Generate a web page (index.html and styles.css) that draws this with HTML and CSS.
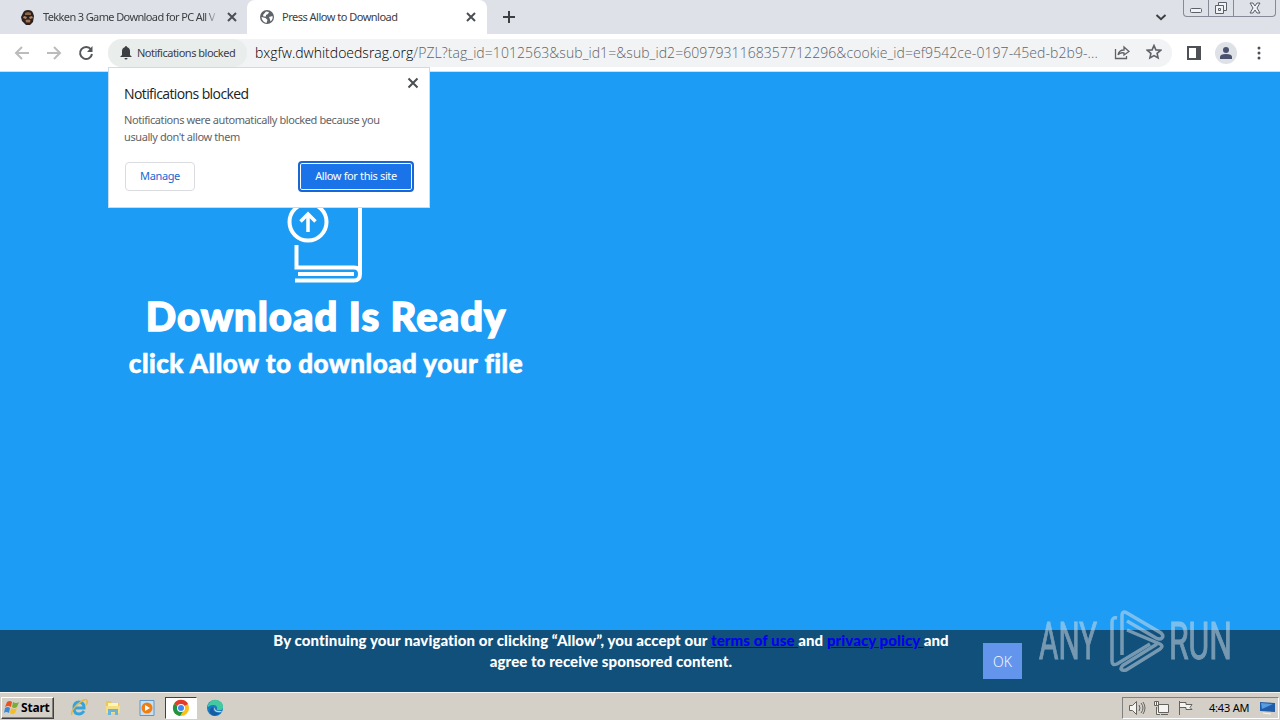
FILE: index.html
```html
<!DOCTYPE html>
<html lang="en">
<head>
    <meta charset="UTF-8">
    <title>Press Allow to Download</title>
    <link rel="stylesheet" href="styles.css">
</head>
<body>
    <div class="tabstrip">
        <div class="tab">
            <svg class="favicon" width="16" height="16" viewBox="0 0 16 16">
                <path d="M3 4Q4 1 8 1t5 3l1 3-1 6-3 3H6l-4-4-1-4z" fill="#2b2020"/>
                <path d="M5 4l3-1 3 1v2H5z" fill="#8b6545"/>
                <path d="M4 7l3 1-1 2-3-1zM9 8l3-1 1 2-3 1z" fill="#b78660"/>
                <path d="M5 11l3-1 3 1-1 3H6z" fill="#6b402b"/>
                <path d="M6 12h4" stroke="#d5aa84"/>
            </svg>
            <span class="tab-title title-one">Tekken 3 Game Download for PC All V</span>
            <svg class="close" width="10" height="10" viewBox="0 0 10 10"><path d="M1 1l8 8M9 1L1 9"/></svg>
        </div>
        <div class="tab active">
            <svg class="favicon" width="16" height="16" viewBox="0 0 16 16">
                <circle cx="8" cy="8" r="7" fill="#5f6368"/>
                <path d="M2.500 8l4 1 2 2-1 3Q3 13 2.500 8zM7 2.500l3 .5-1 2-2 1v1.500H4.500L4 6zM10 8l3.500-1 .2 2q-.5 2.500-2.200 3.500l-.5-2z" fill="#fff"/>
            </svg>
            <span class="tab-title title-two">Press Allow to Download</span>
            <svg class="close" width="10" height="10" viewBox="0 0 10 10"><path d="M1 1l8 8M9 1L1 9"/></svg>
        </div>
        <svg class="new-tab" width="12" height="12" viewBox="0 0 12 12"><path d="M6 0v12M0 6h12"/></svg>
        <svg class="chevron" width="12" height="8" viewBox="0 0 12 8"><path d="M1.500 2L6 6.200 10.500 2"/></svg>
        <div class="window-buttons">
            <span><svg width="14" height="16" viewBox="0 0 14 16"><rect x="1.500" y="8.500" width="11" height="4" rx="1"/></svg></span>
            <span><svg width="14" height="16" viewBox="0 0 14 16"><path d="M4.500 5V2.500h8v8H10M1.500 5.500h8v8h-8zM4.500 8.500h2v2h-2z"/></svg></span>
            <span><svg width="12" height="16" viewBox="0 0 12 16"><path d="M1 3h3l2 3 2-3h3L8 8l3 5H8l-2-3-2 3H1l3-5z"/></svg></span>
        </div>
    </div>

    <div class="toolbar">
        <svg class="nav" width="16" height="16" viewBox="0 0 16 16"><path d="M15 8H2M8 2L2 8l6 6"/></svg>
        <svg class="nav" width="16" height="16" viewBox="0 0 16 16"><path d="M1 8h13M8 2l6 6-6 6"/></svg>
        <svg class="nav reload" width="16" height="16" viewBox="0 0 16 16"><path d="M13 4.500A6 6 0 1 0 14 9"/><path d="M14.500 1v6H9z"/></svg>
        <div class="address">
            <div class="chip">
                <svg width="12" height="14" viewBox="0 0 12 14"><path d="M5 1a1 1 0 0 1 2 0q3 1 3 4v4l2 2H0l2-2V5q0-3 3-4zM4.500 12h3a1.500 1.500 0 0 1-3 0z" fill="#3c4043"/></svg>
                <span>Notifications blocked</span>
            </div>
            <div class="url"><span class="host">bxgfw.dwhitdoedsrag.org</span><span class="path">/PZL?tag_id=1012563&amp;sub_id1=&amp;sub_id2=6097931168357712296&amp;cookie_id=ef9542ce-0197-45ed-b2b9-...</span></div>
            <svg class="share" width="16" height="16" viewBox="0 0 16 16"><path d="M1.500 5v9.500h11V12M4 11q1-5 6-5V3l5 4.500L10 11V9q-4-1-6 2z"/></svg>
            <svg class="star" width="16" height="16" viewBox="0 0 16 16"><path d="M8 1.500l1.900 4.400 4.700.4-3.500 3.100 1 4.600L8 11.600 3.900 14l1-4.600-3.500-3.100 4.700-.4z"/></svg>
        </div>
        <svg class="panel" width="14" height="14" viewBox="0 0 14 14"><path d="M1 1h12v12H1z" fill="none" stroke="#4d5156" stroke-width="2"/><path d="M9 1h4v12H9z" fill="#4d5156"/></svg>
        <svg class="profile" width="22" height="22" viewBox="0 0 22 22"><circle cx="11" cy="11" r="11" fill="#dee1e6"/><circle cx="11" cy="8" r="3" fill="#4a5270"/><path d="M5 17v-2q0-3 6-3t6 3v2z" fill="#4a5270"/></svg>
        <svg class="menu" width="4" height="14" viewBox="0 0 4 14"><circle cx="2" cy="2" r="1.500"/><circle cx="2" cy="7" r="1.500"/><circle cx="2" cy="12" r="1.500"/></svg>
    </div>

    <div class="page">
        <div class="hero">
            <svg class="book" width="80" height="96" viewBox="0 0 80 96">
                <g fill="none" stroke="#fff" stroke-width="4">
                    <circle cx="22" cy="34" r="18.500"/>
                    <path d="M22 44V27M14.500 33.500L22 26l7.500 7.500" stroke-width="3.500"/>
                    <path d="M10.500 57v22.500H68q6 0 6 6.500t-6 6.500H9M74 86V15M12 86h56"/>
                </g>
            </svg>
            <h1>Download Is Ready</h1>
            <h2>click Allow to download your file</h2>
        </div>
        <div class="consent">
            <p>By continuing your navigation or clicking “Allow”, you accept our <a href="#">terms of use </a>and <a href="#">privacy policy </a>and<br>agree to receive sponsored content.</p>
            <button class="ok">OK</button>
        </div>
    </div>

    <div class="popup">
        <svg class="close" width="12" height="12" viewBox="0 0 12 12"><path d="M1.500 1.500l9 9M10.500 1.500l-9 9"/></svg>
        <h3>Notifications blocked</h3>
        <p>Notifications were automatically blocked because you<br>usually don't allow them</p>
        <div class="actions">
            <button class="manage">Manage</button>
            <button class="allow">Allow for this site</button>
        </div>
    </div>

    <svg class="watermark" width="210" height="76" viewBox="0 0 210 76">
        <text x="4" y="53" textLength="58" lengthAdjust="spacingAndGlyphs">ANY</text>
        <text x="134" y="53" textLength="63" lengthAdjust="spacingAndGlyphs">RUN</text>
        <g fill="none" stroke-width="3.500">
            <path d="M82 12q-5-1-5 4v39q0 5 5 3l33-20"/>
            <path d="M87 49V10q0-6 5-3l34 20q3 3 1 5t-6 0L92 15"/>
            <path d="M92 24l33 14q4 2 0 5L91 64q-4 1-5-1 0-3 4-5l32-20"/>
        </g>
    </svg>

    <div class="taskbar">
        <div class="start">
            <svg width="16" height="15" viewBox="0 0 16 15"><path d="M3 2q3-2 5 0L7 7Q4 5 1 7z" fill="#e85324"/><path d="M9 2q3 2 6 0l-2 5q-3 2-5 0z" fill="#79ad36"/><path d="M1 8q3-2 5 0l-1 5q-3-2-5 0z" fill="#3b8bd4"/><path d="M7 8q3 2 6 0l-2 5q-3 2-5 0z" fill="#f5bd28"/></svg>
            <b>Start</b>
        </div>
        <div class="launch">
            <svg width="18" height="18" viewBox="0 0 18 18"><path d="M14 12q-2 3-5 3-5 0-5-6t5-6q5 0 5 6H5" fill="none" stroke="#35a4dc" stroke-width="3"/><path d="M2 16Q0 12 8 5t9-3q1 1-1 4" fill="none" stroke="#e9b83c" stroke-width="1.500"/></svg>
        </div>
        <div class="launch">
            <svg width="18" height="18" viewBox="0 0 18 18"><path d="M2 2h5l1 2h7v10H2z" fill="#e9c75c"/><path d="M4 4h10v3H4z" fill="#fff5b0"/><path d="M2 7h14v7H2z" fill="#f4de86"/><path d="M4 16v-6h10v6h-3v-3H7v3z" fill="#69b4d8"/></svg>
        </div>
        <div class="launch">
            <svg width="18" height="18" viewBox="0 0 18 18"><path d="M2 1.500h14v15H2z" fill="#c5dff4" stroke="#5f97c8"/><circle cx="9" cy="9" r="5.500" fill="#ef7d12"/><path d="M7 6l5 3-5 3z" fill="#fff"/></svg>
        </div>
        <div class="launch running">
            <svg width="18" height="18" viewBox="0 0 18 18"><circle cx="9" cy="9" r="8" fill="#fbc116"/><path d="M9 9L2 5a8 8 0 0 1 14 0z" fill="#e33b2e"/><path d="M9 9L2 5a8 8 0 0 0 6 12l4-6z" fill="#229342"/><circle cx="9" cy="9" r="4" fill="#fff"/><circle cx="9" cy="9" r="3" fill="#4285f4"/></svg>
        </div>
        <div class="launch">
            <svg width="18" height="18" viewBox="0 0 18 18"><circle cx="9" cy="9" r="8" fill="#167bc4"/><path d="M2 6q3-6 9-5 7 2 6 8-1 3-6 2 1-5-4-5-3 0-5 2z" fill="#43c9a0"/><path d="M7 8q-1 6 7 6-4 4-8 2-4-3-1-7z" fill="#155ca5"/><path d="M9 8q-1 3 3 4h4l-1 1q-6 1-7-3z" fill="#d4d0c8"/></svg>
        </div>
        <div class="tray">
            <svg width="18" height="16" viewBox="0 0 18 16"><path d="M1.500 5.500h3l4-4v13l-4-4h-3z"/><path d="M11 5q2 3 0 6M13 3q4 5 0 10M15 2q4 6 0 12" fill="none"/></svg>
            <svg class="network" width="18" height="16" viewBox="0 0 18 16"><path d="M5.500 4.500h10v8h-10zM8 14.500h7M3.500 7v7.500H7M1.500 1.500v4h4v-4zM3.500 1v5"/></svg>
            <svg class="flag" width="16" height="16" viewBox="0 0 16 16"><path d="M1.500 1v14M2 2.500h6v2h6l-2 3 2 2H8v-2H2"/></svg>
            <span class="clock">4:43 AM</span>
            <svg class="desktop" width="16" height="14" viewBox="0 0 16 14"><path d="M0 1l15 1v9L0 10z" fill="#215caa"/><path d="M1 2l12 1-11 5z" fill="#579be0"/><path d="M3 12l8 1" stroke="#f3f5f7"/></svg>
        </div>
    </div>
</body>
</html>
```
FILE: styles.css
```css
* {
    box-sizing: border-box;
}

body {
    margin: 0;
    width: 1280px;
    height: 720px;
    overflow: hidden;
    position: relative;
    display: flex;
    flex-direction: column;
    font-family: "Noto Sans", sans-serif;
    font-size: 11px;
    color: #3c4043;
}

svg {
    display: block;
    flex: none;
}

button {
    font-family: inherit;
    padding: 0;
}

.tabstrip {
    height: 34px;
    background: #dee1e8;
    display: flex;
    align-items: center;
    flex: none;
}

.tab {
    width: 247px;
    height: 34px;
    padding: 0 10px 0 20px;
    display: flex;
    align-items: center;
    flex: none;
}

.tab.active {
    width: 240px;
    padding: 0 11px 0 12px;
    background: #fff;
    border-radius: 8px 8px 0 0;
}

.tab-title {
    margin-left: 7px;
    margin-top: -1px;
    white-space: nowrap;
    flex: 1;
}

.title-one {
    letter-spacing: -0.62px;
    margin-right: 8px;
    -webkit-mask-image: linear-gradient(to right, #000 92%, transparent);
}

.title-two {
    letter-spacing: -0.5px;
}

.close {
    fill: none;
    stroke: #4b4f53;
    stroke-width: 2;
}

.new-tab {
    margin-left: 16px;
    stroke: #3c4043;
    stroke-width: 2;
}

.chevron {
    margin-left: auto;
    fill: none;
    stroke: #3c4043;
    stroke-width: 2;
}

.window-buttons {
    display: flex;
    align-self: flex-start;
    height: 17px;
    margin: 0 4px 0 16px;
    border: 1px solid #858a96;
    border-top: 0;
    border-radius: 0 0 4px 4px;
}

.window-buttons span {
    width: 25px;
    display: flex;
    justify-content: center;
    border-right: 1px solid #858a96;
}

.window-buttons span:last-child {
    width: 41px;
    border: 0;
}

.window-buttons svg {
    fill: #f1f2f5;
    stroke: #5c606b;
}

.toolbar {
    height: 38px;
    flex: none;
    display: flex;
    align-items: center;
    background: #fff;
    border-bottom: 1px solid #d5dce3;
    padding-left: 14px;
}

.nav {
    margin-right: 16px;
    fill: none;
    stroke: #babcbe;
    stroke-width: 2;
}

.reload {
    margin-right: 14px;
    stroke: #54585c;
}

.reload path:last-child {
    fill: #54585c;
    stroke: none;
}

.address {
    width: 1064px;
    height: 28px;
    display: flex;
    align-items: center;
    background: #f1f3f4;
    border-radius: 14px;
}

.chip {
    display: flex;
    align-items: center;
    width: 139px;
    height: 28px;
    padding-left: 12px;
    background: #e9eeed;
    border-radius: 14px;
    letter-spacing: -0.5px;
    white-space: nowrap;
}

.chip span {
    margin: -1px 0 0 5px;
}

.url {
    width: 859px;
    margin-left: 8px;
    font-family: "Open Sans", sans-serif;
    font-size: 14px;
    font-weight: 300;
    white-space: nowrap;
}

.host {
    color: #000;
    letter-spacing: 0;
}

.path {
    color: #5f6368;
    letter-spacing: 0.07px;
}

.share,
.star {
    fill: none;
    stroke: #5f6368;
    stroke-width: 1.3;
}

.share {
    margin-top: -2px;
}

.star {
    margin-left: 16px;
    margin-top: -1px;
    stroke-width: 1.6;
}

.panel {
    margin-left: 15px;
}

.profile {
    margin-left: 14px;
}

.menu {
    margin-left: 20px;
    fill: #4d5156;
}

.page {
    height: 620px;
    flex: none;
    display: flex;
    flex-direction: column;
    justify-content: space-between;
    background: #1c9cf4;
}

.hero {
    width: 652px;
    padding-top: 116px;
    display: flex;
    flex-direction: column;
    align-items: center;
    font-family: Lato, sans-serif;
    color: #fff;
    white-space: nowrap;
}

.hero h1 {
    margin: 7px 0 0;
    font-size: 40px;
    line-height: 50px;
    font-weight: 900;
    letter-spacing: 1px;
    -webkit-text-stroke: 1.4px #fff;
}

.hero h2 {
    margin: 6px 0 0;
    font-size: 26px;
    line-height: 32px;
    font-weight: 900;
    letter-spacing: 0.5px;
    -webkit-text-stroke: 0.6px #fff;
}

.consent {
    height: 62px;
    display: flex;
    align-items: flex-start;
    background: #10507b;
    color: #fff;
    font-family: Lato, sans-serif;
}

.consent p {
    width: 676px;
    margin: 0 0 0 273px;
    font-size: 15px;
    font-weight: 900;
    line-height: 21px;
    letter-spacing: 0.09px;
    text-align: center;
    white-space: nowrap;
}

.consent a {
    color: #0000ee;
}

.ok {
    width: 39px;
    height: 36px;
    margin: 13px 0 0 34px;
    border: 0;
    background: #6495ed;
    color: #fff;
    font-family: "Open Sans", sans-serif;
    font-size: 14px;
    font-weight: 300;
}

.popup {
    position: absolute;
    left: 108px;
    top: 67px;
    width: 322px;
    height: 141px;
    padding: 17px 16px 0;
    background: #fff;
    border: 1px solid #c9dcea;
}

.popup .close {
    position: absolute;
    right: 10px;
    top: 9px;
}

.popup h3 {
    margin: 0 0 0 -1px;
    font-family: "Open Sans", sans-serif;
    font-size: 14px;
    line-height: 18px;
    font-weight: 400;
    letter-spacing: -0.6px;
    color: #202124;
}

.popup p {
    margin: 8px 0 16px -1px;
    line-height: 17px;
    color: #5f6368;
    letter-spacing: -0.41px;
    white-space: nowrap;
}

.actions {
    display: flex;
    justify-content: space-between;
    align-items: center;
    margin-right: -1px;
}

.actions button {
    height: 29px;
    padding-bottom: 2px;
    font-size: 11px;
    border-radius: 4px;
    letter-spacing: -0.36px;
}

.manage {
    width: 70px;
    background: #fff;
    color: #1967d2;
    border: 1px solid #dadce0;
}

.actions .allow {
    width: 116px;
    height: 31px;
    background: #1a73e8;
    color: #fff;
    border: 2px solid #1967d2;
    box-shadow: inset 0 0 0 1px #fff;
}

.watermark {
    position: absolute;
    left: 1035px;
    top: 606px;
    overflow: visible;
    opacity: 0.5;
    fill: #dce2e8;
    stroke: #dce2e8;
}

.watermark text {
    font-family: Roboto, sans-serif;
    font-size: 51px;
    stroke-width: 1;
}

.taskbar {
    height: 28px;
    flex: none;
    display: flex;
    align-items: center;
    background: #d4d0c8;
    border-top: 1px solid #f5f4f1;
    padding: 2px 0 0 1px;
    color: #000;
}

.start {
    width: 53px;
    height: 22px;
    margin-right: 9px;
    display: flex;
    align-items: center;
    padding-left: 2px;
    border: 1px solid #fff;
    border-right-color: #404040;
    border-bottom-color: #404040;
    box-shadow: inset -1px -1px #808080;
}

.start b {
    font-size: 12px;
    letter-spacing: -0.2px;
    margin: -1px 0 0 1px;
}

.launch {
    width: 32px;
    height: 22px;
    margin-right: 2px;
    display: flex;
    align-items: center;
    justify-content: center;
}

.running {
    background: #fff;
    border: 1px solid #404040;
    border-right-color: #fff;
    border-bottom-color: #fff;
}

.tray {
    width: 157px;
    height: 22px;
    margin-left: auto;
    margin-right: 1px;
    padding-left: 5px;
    display: flex;
    align-items: center;
    border: 1px solid #808080;
    border-right-color: #fff;
    border-bottom-color: #fff;
}

.tray svg {
    fill: #f5f4f1;
    stroke: #65635f;
}

.network,
.flag {
    margin-left: 7px;
}

.clock {
    width: 42px;
    margin: -1px 0 0 15px;
    letter-spacing: -0.2px;
    white-space: nowrap;
}

.tray .desktop {
    margin-left: 9px;
    stroke: none;
}
```
